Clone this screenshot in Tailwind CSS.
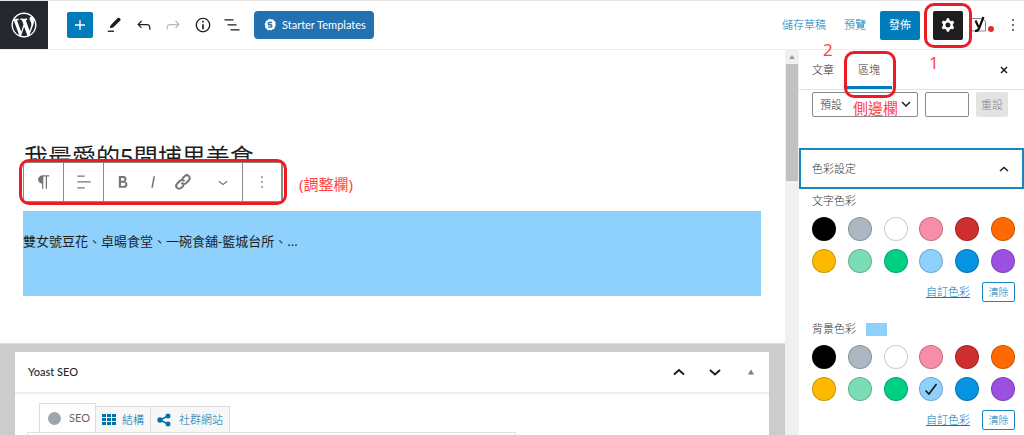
<!DOCTYPE html>
<html lang="zh-TW">
<head>
  <meta charset="UTF-8" />
  <meta name="viewport" content="width=device-width, initial-scale=1.0" />
  <title>編輯文章</title>
  <script src="https://cdn.jsdelivr.net/npm/@tailwindcss/browser@4"></script>
</head>
<body class="h-screen flex flex-col overflow-hidden bg-white text-[#1e1e1e] text-[11px] leading-4 font-['Noto_Sans','Noto_Sans_CJK_TC',sans-serif]">

  <!-- Top bar -->
  <header class="h-[50px] shrink-0 flex items-center border-t border-b border-t-[#e4e4e4] border-b-[#ededed]">
    <a href="#" aria-label="WordPress" class="w-12 h-full bg-[#23282e] text-white flex items-center justify-center">
      <svg class="w-[30px] h-[30px]" viewBox="-2 -2 24 24" fill="currentColor"><path d="M20 10c0-5.51-4.49-10-10-10C4.48 0 0 4.49 0 10c0 5.52 4.48 10 10 10 5.51 0 10-4.48 10-10zM7.78 15.37L4.37 6.22c.55-.02 1.17-.08 1.17-.08.5-.06.44-1.13-.06-1.11 0 0-1.45.11-2.37.11-.18 0-.37 0-.58-.01C4.12 2.69 6.87 1.11 10 1.11c2.33 0 4.45.87 6.05 2.34-.68-.11-1.65.39-1.65 1.58 0 .74.45 1.36.9 2.1.35.61.55 1.36.55 2.46 0 1.49-1.4 5-1.4 5l-3.03-8.37c.54-.02.82-.17.82-.17.5-.05.44-1.25-.06-1.22 0 0-1.44.12-2.38.12-.87 0-2.33-.12-2.33-.12-.5-.03-.56 1.2-.06 1.22l.92.08 1.26 3.41zM17.41 10c.24-.64.74-1.87.43-4.25.7 1.29 1.05 2.71 1.05 4.25 0 3.29-1.73 6.24-4.4 7.78.97-2.59 1.94-5.2 2.92-7.78zM6.1 18.09C3.12 16.65 1.11 13.53 1.11 10c0-1.3.23-2.48.72-3.59C3.25 10.3 4.67 14.2 6.1 18.09zm4.03-6.63l2.58 6.98c-.86.29-1.76.45-2.71.45-.79 0-1.57-.11-2.29-.33.81-2.38 1.62-4.74 2.42-7.1z"/></svg>
    </a>
    <button aria-label="新增區塊" class="ml-[19px] w-[26px] h-[26px] rounded-xs bg-[#007cba] text-white flex items-center justify-center">
      <svg class="w-5 h-5" viewBox="0 0 24 24" fill="currentColor"><path d="M18 11.2h-5.2V6h-1.6v5.2H6v1.6h5.2V18h1.6v-5.2H18z"/></svg>
    </button>
    <div class="ml-[11px] w-[138px] flex justify-between">
      <button aria-label="工具"><svg class="w-5 h-5" viewBox="0 0 24 24"><path d="M7 15.8l1-3.6L16.400 3.600c.6-.6 1.500-.6 2.100 0l1 1c.6.6.6 1.500 0 2.100L11 15l-4 .8z" fill="#1e1e1e"/><path d="M4.500 19.500H12" stroke="#1e1e1e" stroke-width="1.600"/></svg></button>
      <button aria-label="復原"><svg class="w-5 h-5" viewBox="0 0 24 24" fill="currentColor"><path d="M18.3 11.7c-.6-.6-1.4-.9-2.3-.9H6.7l2.9-3.3-1.1-1-4.5 5L8.500 16l1-1-2.700-2.700H16c.5 0 .9.2 1.300.5 1 1 1 3.400 1 4.500v.3h1.500v-.2c0-1.500 0-4.300-1.500-5.700z"/></svg></button>
      <button aria-label="重做" class="text-[#bbb]"><svg class="w-5 h-5" viewBox="0 0 24 24" fill="currentColor"><path d="M15.6 6.5l-1.1 1 2.9 3.3H8c-.9 0-1.7.3-2.3.9-1.4 1.5-1.4 4.2-1.4 5.6v.2h1.5v-.3c0-1.1 0-3.5 1-4.5.3-.3.7-.5 1.3-.5h9.2L14.5 15l1.1 1.1 4.6-4.6-4.6-5z"/></svg></button>
      <button aria-label="詳細資料"><svg class="w-5 h-5" viewBox="0 0 24 24" fill="currentColor"><path d="M12 3.2c-4.8 0-8.8 3.9-8.8 8.8 0 4.8 3.9 8.8 8.8 8.8 4.8 0 8.8-3.9 8.8-8.8 0-4.8-4-8.8-8.8-8.8zm0 16c-4 0-7.2-3.3-7.2-7.2C4.8 8 8 4.8 12 4.8s7.2 3.3 7.2 7.2c0 4-3.2 7.2-7.2 7.2zM11 17h2v-6h-2v6zm0-8h2V7h-2v2z"/></svg></button>
      <button aria-label="清單檢視"><svg class="w-5 h-5" viewBox="0 0 24 24" fill="currentColor"><path d="M13.8 5.2H3v1.500h10.800V5.200zm-3.600 12v1.500H21v-1.500H10.200zm7.200-6H6.600v1.500h10.800v-1.500z"/></svg></button>
    </div>
    <button class="ml-3 h-7 pl-[10px] pr-2 rounded-sm bg-[#2271b1] text-white flex items-center gap-[6px]">
      <svg class="w-3 h-[14px]" viewBox="0 0 12 13"><path d="M4.500.8L6 .2l1.500.8 2-.1.7 1.500 1.500 1.100-.4 1.800.4 2-1 1.300-.3 1.900-1.900.3L7 12l-1.500-.6-1.900.3-.9-1.500-1.600-1 .2-1.900-.8-1.700 1.200-1.300.1-1.900 1.600-.4z" fill="#fff"/><path d="M8 4H5.300a1.100 1.100 0 000 2.300h1.400a1.100 1.100 0 010 2.300H4" fill="none" stroke="#2271b1" stroke-width="1.400"/></svg>
      <span class="font-['Lato',sans-serif]">Starter Templates</span>
    </button>

    <div class="ml-auto flex items-center text-[#007cba]">
      <button class="font-light">儲存草稿</button>
      <button class="ml-[18px] font-light">預覽</button>
      <button class="ml-[14px] w-10 h-[29px] rounded-xs bg-[#007cba] text-white">發佈</button>
      <button aria-label="設定" class="relative z-10 ml-[13px] w-[30px] h-[29px] rounded-xs bg-[#1e1e1e] text-white flex items-center justify-center">
        <svg class="w-5 h-5" viewBox="0 0 24 24" fill="currentColor"><path fill-rule="evenodd" d="M10.289 4.836A1 1 0 0111.275 4h1.306a1 1 0 01.987.836l.244 1.466c.787.26 1.503.679 2.108 1.218l1.393-.522a1 1 0 011.216.437l.653 1.130a1 1 0 01-.23 1.273l-1.148.944a6.025 6.025 0 010 2.435l1.149.946a1 1 0 01.23 1.272l-.653 1.130a1 1 0 01-1.216.437l-1.394-.522c-.605.54-1.320.958-2.108 1.218l-.244 1.466a1 1 0 01-.987.836h-1.306a1 1 0 01-.986-.836l-.244-1.466a5.995 5.995 0 01-2.108-1.218l-1.394.522a1 1 0 01-1.217-.436l-.653-1.131a1 1 0 01.23-1.272l1.149-.946a6.026 6.026 0 010-2.435l-1.148-.944a1 1 0 01-.23-1.272l.653-1.131a1 1 0 011.217-.437l1.393.522a5.994 5.994 0 012.108-1.218l.244-1.466zM14.929 12a3 3 0 11-6 0 3 3 0 016 0z"/></svg>
        <span class="absolute -inset-x-[9px] -inset-y-2 border-3 border-[#ed1c24] rounded-[10px]"></span>
        <span class="absolute -left-1 top-[42px] text-[17px] leading-5 text-[#ff4343]">1</span>
      </button>
      <button aria-label="Yoast SEO" class="ml-2 w-6">
        <svg class="w-6 h-5" viewBox="0 0 24 20"><path d="M2 3.500h9.500l3 3V16H2a1.500 1.500 0 01-1.500-1.500V5A1.500 1.500 0 012 3.500z" fill="none" stroke="#888"/><path d="M4.500 5.500L7.500 12M12.500 2L8 13.500Q7 16 4 16" fill="none" stroke="#111" stroke-width="2.200"/><circle cx="20" cy="14" r="3" fill="#dc3232"/></svg>
      </button>
      <button aria-label="選項" class="ml-2 mr-px w-5 text-[#1e1e1e]"><svg class="w-5 h-5" viewBox="0 0 24 24" fill="currentColor"><path d="M13 19h-2v-2h2v2zm0-6h-2v-2h2v2zm0-6h-2V5h2v2z"/></svg></button>
    </div>
  </header>

  <div class="flex-1 min-h-0 flex">
    <!-- Editor -->
    <main class="flex-1 min-w-0 flex flex-col">
      <section class="h-[293px] shrink-0 pt-[89px] pl-6 pr-6">
        <div class="relative">
          <h1 class="text-[24px] leading-9">我最愛的5間埔里美食</h1>
          <div class="absolute -left-px top-[23px] flex items-center">
            <div role="toolbar" class="relative h-10 flex bg-white border border-[#8a8a8a] text-[#757575] divide-x divide-[#8a8a8a]">
              <button aria-label="段落" class="w-10 flex items-center justify-center"><svg class="w-5 h-5" viewBox="0 0 24 24" fill="currentColor"><path d="M18.300 4H9.900v-.1l-.9.2c-2.300.4-4 2.400-4 4.800s1.700 4.400 4 4.800l.7.1V20h1.500V5.500h2.900V20h1.500V5.500h2.700V4z"/><path d="M10 5v8C4 13 4 5 10 5z"/></svg></button>
              <button aria-label="對齊" class="w-10 flex items-center justify-center"><svg class="w-5 h-5" viewBox="0 0 24 24" fill="currentColor"><path d="M4 19.800h8.900v-1.500H4v1.500zm8.900-15.600H4v1.500h8.900V4.200zm-8.900 7v1.500h16v-1.500H4z"/></svg></button>
              <div class="w-[139px] pl-[9px] pr-[9px] flex items-center">
                <button aria-label="粗體"><svg class="w-5 h-5" viewBox="0 0 24 24" fill="currentColor"><path d="M14.7 11.3c1-.6 1.5-1.6 1.5-3 0-2.3-1.3-3.4-4-3.4H7v14h5.800c1.400 0 2.500-.3 3.300-1 .8-.7 1.200-1.700 1.200-2.900.1-1.900-.8-3.100-2.600-3.700zm-5.100-4h2.300c.6 0 1.100.1 1.400.4.3.3.5.7.5 1.200s-.2 1-.5 1.200c-.3.3-.8.4-1.400.4H9.600V7.300zm4.600 9c-.4.3-1 .4-1.700.4H9.600v-3.900h2.900c.7 0 1.300.2 1.700.5.4.3.6.8.6 1.500s-.2 1.200-.6 1.500z"/></svg></button>
                <button aria-label="斜體" class="ml-[10px]"><svg class="w-5 h-5" viewBox="0 0 24 24" fill="currentColor"><path d="M12.500 5L10 19h1.900l2.500-14z"/></svg></button>
                <button aria-label="連結" class="ml-[10px]"><svg class="w-5 h-5" viewBox="0 0 24 24" fill="none" stroke="currentColor" stroke-width="2.400"><g transform="rotate(-45 12 12)"><path d="M10 15.500H5.500a3.500 3.500 0 010-7h5a3.500 3.500 0 013.300 4.200M14 8.500h4.500a3.500 3.500 0 010 7h-5a3.500 3.500 0 01-3.300-4.200"/></g></svg></button>
                <button aria-label="更多" class="ml-auto"><svg class="w-5 h-5" viewBox="0 0 24 24" fill="currentColor"><path d="M17.500 11.600L12 16l-5.500-4.400.9-1.200L12 14l4.500-3.600 1 1.200z"/></svg></button>
              </div>
              <button aria-label="選項" class="w-[39px] flex items-center justify-center"><svg class="w-5 h-5" viewBox="0 0 24 24" fill="currentColor"><path d="M13 19h-2v-2h2v2zm0-6h-2v-2h2v2zm0-6h-2V5h2v2z"/></svg></button>
              <span class="absolute -inset-x-[5px] -inset-y-1 border-3 border-[#ed1c24] rounded-[10px]"></span>
            </div>
            <span class="ml-4 mt-1 text-[15px] leading-5 text-[#ff4343]">(調整欄)</span>
          </div>
        </div>
        <p class="mt-9 -ml-px h-[85px] pt-5 text-[13px] leading-5 bg-[#8ed1fc]">雙女號豆花、卓暘食堂、一碗食舖-籃城台所、...</p>
      </section>

      <!-- Yoast meta box -->
      <section class="flex-1 min-h-0 bg-[#ccc] border-t border-[#ddd] pt-2 pl-[15px] pr-4">
        <div class="h-full bg-white">
          <div class="h-[42px] flex items-center pl-[13px] pr-2 border-b-2 border-[#eee]">
            <h2 class="font-medium font-['Lato',sans-serif] text-[#23282d]">Yoast SEO</h2>
            <div class="ml-auto flex gap-4">
              <button aria-label="上移"><svg class="w-5 h-5" viewBox="0 0 20 20" fill="none" stroke="#1e1e1e" stroke-width="2"><path d="M5 12.500l5-4.500 5 4.500"/></svg></button>
              <button aria-label="下移"><svg class="w-5 h-5" viewBox="0 0 20 20" fill="none" stroke="#1e1e1e" stroke-width="2"><path d="M5 8l5 4.500L15 8"/></svg></button>
              <button aria-label="收合"><svg class="w-5 h-5" viewBox="0 0 20 20" fill="#787c82"><path d="M7 12.500l3-5 3 5z"/></svg></button>
            </div>
          </div>
          <div class="pt-[9px] pl-3">
            <div class="relative pl-3 flex items-end font-light text-[#0073aa]">
              <button class="h-[29px] w-[57px] flex items-center gap-2 pl-2 bg-white border border-b-0 border-[#ddd] font-normal text-[#666]"><span class="w-[13px] h-[13px] rounded-full bg-[#a0a5aa]"></span><span class="font-['Lato',sans-serif]">SEO</span></button>
              <button class="h-[26px] pl-[6px] pr-[6px] flex items-center gap-[6px] bg-[#f7f7f7] border border-l-0 border-b-0 border-[#ddd]">
                <svg class="w-[14px] h-3" viewBox="0 0 14 12" fill="currentColor"><path d="M0 0h4v3H0zM5 0h4v3H5zM10 0h4v3h-4zM0 4h4v3H0zM5 4h4v3H5zM10 4h4v3h-4zM0 8h4v3H0zM5 8h4v3H5zM10 8h4v3h-4z"/></svg>結構</button>
              <button class="h-[26px] pl-[6px] pr-[6px] flex items-center gap-2 bg-[#f7f7f7] border border-l-0 border-b-0 border-[#ddd]">
                <svg class="w-[14px] h-[14px]" viewBox="0 0 14 14" fill="currentColor"><path d="M11 3L3 7l8 4" fill="none" stroke="currentColor" stroke-width="1.500"/><circle cx="3" cy="7" r="2.700"/><circle cx="11" cy="3" r="2.500"/><circle cx="11" cy="11" r="2.500"/></svg>社群網站</button>
            </div>
            <div class="h-4 max-w-[489px] border border-[#e2e2e2]"></div>
          </div>
        </div>
      </section>
    </main>

    <!-- Scroll bar -->
    <div class="w-[14px] bg-[#eff1f0] border-r border-[#eee] flex flex-col items-center">
      <svg class="w-[14px] h-[14px]" viewBox="0 0 14 14" fill="#999"><path d="M4 9l3-4 3 4z"/></svg>
      <div class="w-3 h-[117px] bg-[#c1c1c1]"></div>
    </div>

    <!-- Settings sidebar -->
    <aside class="w-[225px] shrink-0 font-light text-[#333]">
      <div class="relative z-10 h-10 flex items-center border-b border-[#e2e2e2] pl-[13px] pr-[10px]">
        <button>文章</button>
        <button class="relative ml-3 w-[46px] h-full border-b-3 border-[#007cba] pt-[3px]">區塊
          <span class="absolute -left-[2px] top-px w-[52px] h-[47px] border-3 border-[#ed1c24] rounded-[10px]"></span>
        </button>
        <button aria-label="關閉" class="ml-auto"><svg class="w-5 h-5" viewBox="0 0 20 20" stroke="#1e1e1e" stroke-width="1.500"><path d="M7 7l6 6M13 7l-6 6"/></svg></button>
        <span class="absolute left-6 -top-[10px] text-[17px] leading-5 font-normal text-[#ff4343]">2</span>
      </div>

      <div class="relative mt-[2px] pl-[13px] flex gap-[7px]">
        <div class="relative">
          <label for="fontSize" class="sr-only">字型大小</label>
          <select id="fontSize" class="appearance-none w-[106px] h-[25px] pl-[7px] border border-[#8a8a8a] rounded-xs bg-white"><option>預設</option></select>
          <svg class="absolute right-1 top-[4px] w-4 h-4" viewBox="0 0 16 16" fill="none" stroke="#1e1e1e" stroke-width="1.500"><path d="M4 6l4 4 4-4"/></svg>
        </div>
        <input type="text" aria-label="自訂大小" class="w-11 h-[25px] border border-[#8a8a8a] rounded-xs" />
        <button class="w-8 h-[25px] rounded-xs bg-[#e3e3e3] text-[#888]">重設</button>
        <span class="absolute left-[54px] top-[6px] text-[15px] leading-5 font-normal text-[#ff4343]">側邊欄</span>
      </div>

      <button class="mt-[31px] w-full h-[41px] pl-[11px] pr-2 flex items-center justify-between border-2 border-[#1a86c0]">色彩設定
        <svg class="w-5 h-5" viewBox="0 0 20 20" fill="none" stroke="#1e1e1e" stroke-width="1.500"><path d="M6 12l4-3.500 4 3.500"/></svg>
      </button>

      <div class="pl-[13px] pr-[9px] pt-1">
        <h3>文字色彩</h3>
        <div class="mt-2 grid grid-cols-[repeat(6,24px)] justify-between gap-y-2">
          <button aria-label="黑色" class="h-6 rounded-full border border-black/20 bg-black"></button>
          <button aria-label="灰色" class="h-6 rounded-full border border-black/20 bg-[#abb8c3]"></button>
          <button aria-label="白色" class="h-6 rounded-full border border-black/20 bg-white"></button>
          <button aria-label="粉紅色" class="h-6 rounded-full border border-black/20 bg-[#f78da7]"></button>
          <button aria-label="紅色" class="h-6 rounded-full border border-black/20 bg-[#cf2e2e]"></button>
          <button aria-label="橘色" class="h-6 rounded-full border border-black/20 bg-[#ff6900]"></button>
          <button aria-label="琥珀色" class="h-6 rounded-full border border-black/20 bg-[#fcb900]"></button>
          <button aria-label="淺綠色" class="h-6 rounded-full border border-black/20 bg-[#7bdcb5]"></button>
          <button aria-label="綠色" class="h-6 rounded-full border border-black/20 bg-[#00d084]"></button>
          <button aria-label="淺藍色" class="h-6 rounded-full border border-black/20 bg-[#8ed1fc]"></button>
          <button aria-label="藍色" class="h-6 rounded-full border border-black/20 bg-[#0693e3]"></button>
          <button aria-label="紫色" class="h-6 rounded-full border border-black/20 bg-[#9b51e0]"></button>
        </div>
        <div class="mt-[9px] flex items-center justify-end gap-3 text-[#007cba]">
          <a href="#" class="underline">自訂色彩</a>
          <button class="w-[33px] h-5 border border-[#1a86c0] rounded-xs text-[10px]">清除</button>
        </div>

        <h3 class="mt-[19px] flex items-center gap-[10px]">背景色彩 <span class="w-[21px] h-[13px] bg-[#8ed1fc]"></span></h3>
        <div class="mt-2 grid grid-cols-[repeat(6,24px)] justify-between gap-y-2">
          <button aria-label="黑色" class="h-6 rounded-full border border-black/20 bg-black"></button>
          <button aria-label="灰色" class="h-6 rounded-full border border-black/20 bg-[#abb8c3]"></button>
          <button aria-label="白色" class="h-6 rounded-full border border-black/20 bg-white"></button>
          <button aria-label="粉紅色" class="h-6 rounded-full border border-black/20 bg-[#f78da7]"></button>
          <button aria-label="紅色" class="h-6 rounded-full border border-black/20 bg-[#cf2e2e]"></button>
          <button aria-label="橘色" class="h-6 rounded-full border border-black/20 bg-[#ff6900]"></button>
          <button aria-label="琥珀色" class="h-6 rounded-full border border-black/20 bg-[#fcb900]"></button>
          <button aria-label="淺綠色" class="h-6 rounded-full border border-black/20 bg-[#7bdcb5]"></button>
          <button aria-label="綠色" class="h-6 rounded-full border border-black/20 bg-[#00d084]"></button>
          <button aria-label="淺藍色" aria-pressed="true" class="h-6 rounded-full border border-black/20 bg-[#8ed1fc] flex items-center justify-center">
            <svg class="w-4 h-4 shrink-0" viewBox="0 0 16 16" fill="none" stroke="#111" stroke-width="1.500"><path d="M2.500 9.500L6 13l7.500-10"/></svg>
          </button>
          <button aria-label="藍色" class="h-6 rounded-full border border-black/20 bg-[#0693e3]"></button>
          <button aria-label="紫色" class="h-6 rounded-full border border-black/20 bg-[#9b51e0]"></button>
        </div>
        <div class="mt-[9px] flex items-center justify-end gap-3 text-[#007cba]">
          <a href="#" class="underline">自訂色彩</a>
          <button class="w-[33px] h-5 border border-[#1a86c0] rounded-xs text-[10px]">清除</button>
        </div>
      </div>
    </aside>
  </div>
</body>
</html>
